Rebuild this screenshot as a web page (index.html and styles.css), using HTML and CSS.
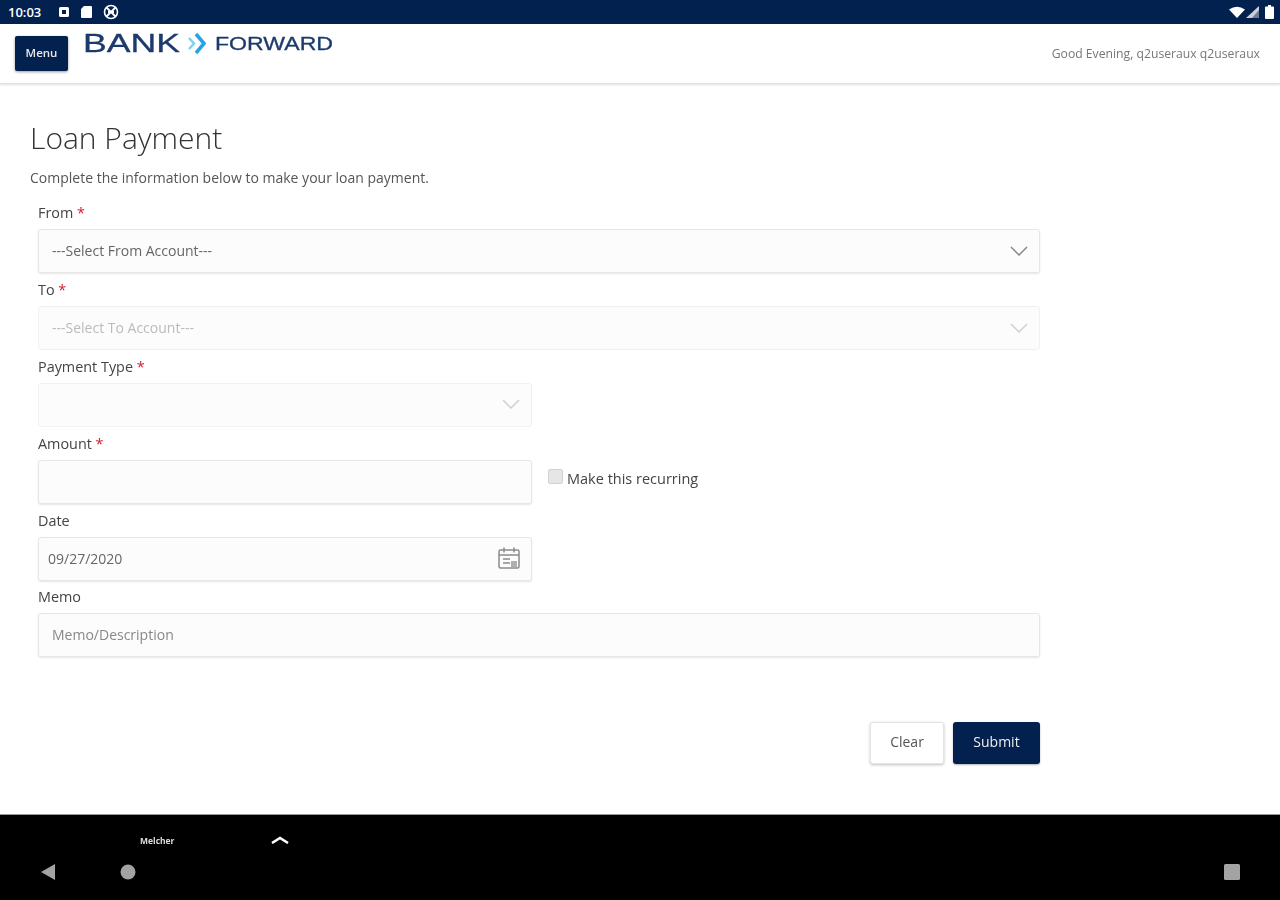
FILE: index.html
```html
<!DOCTYPE html>
<html lang="en">
<head>
<meta charset="utf-8">
<title>Loan Payment</title>
<link rel="stylesheet" href="styles.css">
</head>
<body>
<div class="screen">
  <div class="status">
    <div class="status-left">
      <span class="clock">10:03</span>
      <svg class="ic" width="12" height="12" viewBox="0 0 12 12"><rect x="1" y="1" width="10" height="10" rx="1.5" fill="#fff"/><rect x="4" y="4" width="4" height="4" fill="#03214f"/></svg>
      <svg class="ic" width="13" height="14" viewBox="0 0 13 14"><path d="M4 1h7a1 1 0 0 1 1 1v10a1 1 0 0 1-1 1H2a1 1 0 0 1-1-1V4z" fill="#fff"/></svg>
      <svg class="ic" width="16" height="16" viewBox="0 0 16 16"><circle cx="8" cy="8" r="6.5" fill="none" stroke="#fff" stroke-width="1.6"/><path d="M3.5 3.5l9 9M12.5 3.5l-9 9M5 8h6" stroke="#fff" stroke-width="1.8"/></svg>
    </div>
    <div class="status-right">
      <svg width="16" height="12" viewBox="0 0 16 12"><path d="M0 3.500Q8-2 16 3.500L8 12z" fill="#fff"/></svg>
      <svg width="13" height="12" viewBox="0 0 13 12"><path d="M13 0v12H0z" fill="#c9d0da"/><path d="M13 4v8H6z" fill="#6d7d96"/></svg>
      <svg class="batt" width="9" height="14" viewBox="0 0 9 14"><path d="M3 0h3v1.500h2a1 1 0 0 1 1 1V13a1 1 0 0 1-1 1H1a1 1 0 0 1-1-1V2.500a1 1 0 0 1 1-1h2z" fill="#fff"/></svg>
    </div>
  </div>

  <header class="topbar">
    <button class="menu-btn" type="button">Menu</button>
    <svg class="logo" width="252" height="26" viewBox="0 0 252 26">
      <text class="logo-bank" x="0" y="20" textLength="97" lengthAdjust="spacingAndGlyphs">BANK</text>
      <path d="M106 6l5 5.500-5 5.500" class="chev-a"/>
      <path d="M113 2l8 9.500-8 9.500" class="chev-b"/>
      <text class="logo-forward" x="132" y="18" textLength="118" lengthAdjust="spacingAndGlyphs">FORWARD</text>
    </svg>
    <div class="greeting">Good Evening, q2useraux q2useraux</div>
  </header>

  <main class="content">
    <h1 class="title">Loan Payment</h1>
    <p class="intro">Complete the information below to make your loan payment.</p>
    <form class="form">
      <div class="field">
        <label class="label">From <span class="req">*</span></label>
        <div class="control">
          <span class="value">---Select From Account---</span>
          <svg class="chev" width="18" height="10" viewBox="0 0 18 10"><path d="M1 1l8 8 8-8"/></svg>
        </div>
      </div>
      <div class="field">
        <label class="label">To <span class="req">*</span></label>
        <div class="control disabled">
          <span class="value">---Select To Account---</span>
          <svg class="chev" width="18" height="10" viewBox="0 0 18 10"><path d="M1 1l8 8 8-8"/></svg>
        </div>
      </div>
      <div class="field">
        <label class="label">Payment Type <span class="req">*</span></label>
        <div class="control half disabled">
          <span class="value"></span>
          <svg class="chev" width="18" height="10" viewBox="0 0 18 10"><path d="M1 1l8 8 8-8"/></svg>
        </div>
      </div>
      <div class="field">
        <label class="label">Amount <span class="req">*</span></label>
        <div class="inline">
          <div class="control half"></div>
          <div class="recurring">
            <span class="checkbox"></span>
            <span>Make this recurring</span>
          </div>
        </div>
      </div>
      <div class="field">
        <label class="label">Date</label>
        <div class="control half date">
          <span class="value">09/27/2020</span>
          <svg class="cal" width="24" height="24" viewBox="0 0 24 24"><rect x="2" y="4" width="20" height="18" rx="1.500"/><path d="M2 9h20M7 1.500v5M17 1.500v5M6 13h7M6 17h7"/><rect x="14" y="15" width="6" height="6" class="cal-fill"/></svg>
        </div>
      </div>
      <div class="field">
        <label class="label">Memo</label>
        <div class="control">
          <span class="value placeholder">Memo/Description</span>
        </div>
      </div>
      <div class="actions">
        <button class="btn btn-clear" type="button">Clear</button>
        <button class="btn btn-submit" type="button">Submit</button>
      </div>
    </form>
  </main>

  <footer class="navbar">
    <div class="nav-top">
      <span class="nav-label">Melcher</span>
      <svg width="18" height="8" viewBox="0 0 18 8"><path d="M1 7l8-5 8 5" /></svg>
    </div>
    <div class="nav-keys">
      <svg class="key" width="16" height="16" viewBox="0 0 16 16"><path d="M15 0v16L1 8z"/></svg>
      <svg class="key" width="16" height="16" viewBox="0 0 16 16"><circle cx="8" cy="8" r="7.500"/></svg>
      <span class="spacer"></span>
      <svg class="key" width="16" height="16" viewBox="0 0 16 16"><rect x="0" y="0" width="16" height="16" rx="1.500"/></svg>
    </div>
  </footer>
</div>
</body>
</html>
```

FILE: styles.css
```css
* { box-sizing: border-box; }
html, body { margin: 0; padding: 0; background: #fff; }
body { font-family: "Open Sans", "Liberation Sans", sans-serif; color: #333; }
.screen {
  width: 1280px;
  height: 900px;
  display: flex;
  flex-direction: column;
  overflow: hidden;
  filter: blur(0.7px);
}
.status {
  height: 24px;
  flex: none;
  background: #03214f;
  display: flex;
  justify-content: space-between;
  align-items: center;
  padding: 0 6px 0 8px;
}
.status-left, .status-right { display: flex; align-items: center; }
.status-left { gap: 10px; }
.status-right { gap: 1px; }
.batt { margin-left: 5px; }
.clock { color: #fff; font-size: 13px; font-weight: 600; width: 40px; }
.topbar {
  height: 60px;
  flex: none;
  display: flex;
  align-items: flex-start;
  background: #fff;
  border-bottom: 1px solid #e2e2e2;
  box-shadow: 0 1px 2px rgba(0, 0, 0, 0.12);
  padding: 8px 20px 0 15px;
}
.menu-btn {
  width: 53px;
  height: 35px;
  margin-top: 4px;
  border: 0;
  border-radius: 2px;
  padding: 0 0 2px;
  background: #03214f;
  color: #e8e8e8;
  font: 600 11.5px "Open Sans", sans-serif;
  box-shadow: 0 1px 3px rgba(0, 0, 0, 0.4);
}
.logo { margin: 0 0 0 15px; overflow: visible; }
.logo-bank { font: 25px "Liberation Sans", sans-serif; fill: #1c3a6c; stroke: #1c3a6c; stroke-width: 0.3; }
.logo-forward { font: 18px "Liberation Sans", sans-serif; fill: #1c3a6c; stroke: #1c3a6c; stroke-width: 0.3; }
.chev-a { fill: none; stroke: #7fd0f2; stroke-width: 2.500; }
.chev-b { fill: none; stroke: #22a5e4; stroke-width: 3.500; }
.greeting {
  margin-left: auto;
  margin-top: 14px;
  font-size: 12.2px;
  line-height: 16px;
  color: #777;
}
.content { flex: 1; padding: 0 30px; min-height: 0; }
.title {
  margin: 35px 0 0;
  font-size: 30px;
  line-height: 38px;
  font-weight: 300;
  color: #333;
}
.intro {
  margin: 12px 0 0;
  font-size: 14px;
  line-height: 18px;
  color: #555;
}
.form { width: 1010px; padding-left: 8px; margin-top: 10.4px; display: flex; flex-direction: column; }
.field { height: 76.8px; display: flex; flex-direction: column; }
.label {
  height: 32px;
  font-size: 14.4px;
  line-height: 20px;
  padding: 6px 0 0;
  color: #444;
}
.req { color: #d0202e; }
.control {
  height: 44px;
  width: 1002px;
  flex: none;
  display: flex;
  align-items: center;
  justify-content: space-between;
  background: #fcfcfc;
  border: 1px solid #e6e6e6;
  border-radius: 3px;
  box-shadow: 0 1px 2px rgba(0, 0, 0, 0.1);
  padding: 0 11px 1px 13px;
  font-size: 14px;
  color: #666;
}
.control.half { width: 494px; }
.control.disabled { color: #bbb; box-shadow: none; border-color: #f1f1f1; }
.control.disabled .chev path { stroke: #d0d0d0; }
.chev path { fill: none; stroke: #888; stroke-width: 1.500; }
.date { padding-left: 9px; padding-right: 10px; }
.cal { fill: none; stroke: #8b8b8b; stroke-width: 1.500; }
.cal-fill { fill: #b0b0b0; stroke: none; }
.placeholder { color: #888; }
.inline { display: flex; align-items: flex-start; }
.recurring {
  display: flex;
  align-items: flex-start;
  gap: 4px;
  margin: 9px 0 0 16px;
  font-size: 14.5px;
  line-height: 20px;
  color: #444;
}
.checkbox {
  width: 15px;
  height: 15px;
  background: #e6e6e6;
  border: 1px solid #d2d2d2;
  border-radius: 2px;
}
.actions { display: flex; justify-content: flex-end; gap: 9px; width: 1002px; margin-top: 64px; }
.btn {
  height: 42px;
  border-radius: 3px;
  font: 14px "Open Sans", sans-serif;
  padding: 0 0 3px;
}
.btn-clear {
  width: 74px;
  background: #fff;
  color: #555;
  border: 1px solid #e4e4e4;
  box-shadow: 0 1px 3px rgba(0, 0, 0, 0.25);
}
.btn-submit {
  width: 87px;
  background: #03214f;
  color: #eee;
  border: 0;
  box-shadow: 0 1px 2px rgba(0, 0, 0, 0.3);
}
.navbar {
  height: 86px;
  flex: none;
  background: #000;
  border-top: 1px solid #999;
  padding-top: 18px;
}
.nav-top { display: flex; align-items: center; height: 14px; padding-left: 140px; gap: 97px; }
.nav-label { font-size: 8.5px; font-weight: 700; color: #ddd; width: 34px; white-space: nowrap; }
.nav-top path { fill: none; stroke: #fff; stroke-width: 2.500; }
.nav-keys { display: flex; align-items: center; gap: 64px; padding: 17px 40px 0; }
.spacer { flex: 1; }
.key { fill: #a3a3a3; }
```
